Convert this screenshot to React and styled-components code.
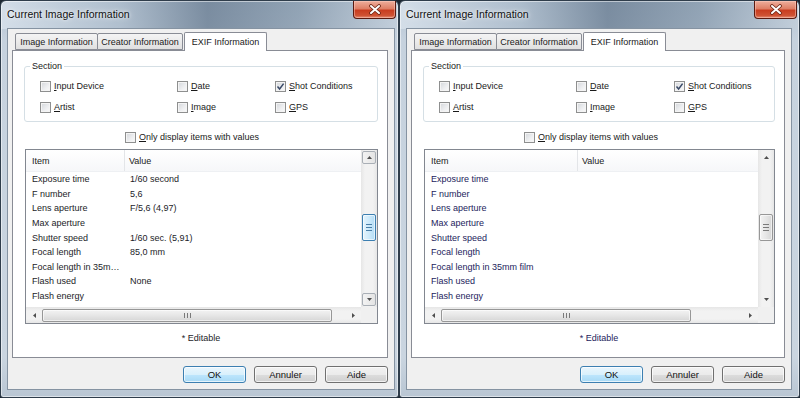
import React from "react";
import styled, { createGlobalStyle } from "styled-components";

const GlobalStyle = createGlobalStyle`
  html, body {
    margin: 0;
    padding: 0;
    background: #1d2833;
    overflow: hidden;
  }
  #root {
    width: 800px;
    height: 398px;
  }
`;

const ITEMS = [
  ["Exposure time", "1/60 second"],
  ["F number", "5,6"],
  ["Lens aperture", "F/5,6 (4,97)"],
  ["Max aperture", ""],
  ["Shutter speed", "1/60 sec. (5,91)"],
  ["Focal length", "85,0 mm"],
  ["Focal length in 35mm film", ""],
  ["Flash used", "None"],
  ["Flash energy", ""],
  ["Focal plane resolution", "3858,6"],
];

const Page = styled.div`
  display: flex;
  width: 800px;
  height: 398px;
  font-family: "Liberation Sans", Arial, sans-serif;
  font-size: 9px;
  color: #1a1a1a;
`;

const Window = styled.div`
  width: ${(p) => p.$w}px;
  height: 398px;
  box-sizing: border-box;
  border: 1px solid #2f3d4b;
  border-radius: 6px 6px 3px 3px;
  padding: 0 ${(p) => p.$padR}px 7px ${(p) => p.$padL}px;
  display: flex;
  flex-direction: column;
  background:
    linear-gradient(90deg, rgba(214, 224, 234, 0.9) 0%, rgba(170, 186, 202, 0.7) 30%, rgba(96, 116, 138, 0.7) 52%, rgba(120, 140, 160, 0.6) 75%, rgba(196, 208, 220, 0.7) 100%) top left / 100% 28px no-repeat,
    linear-gradient(180deg, #b4c3d2 0%, #c6d2de 10%, #cad5e0 90%, #b9c6d3 100%);
  box-shadow: inset 0 0 0 1px rgba(255, 255, 255, 0.5);
`;

const TitleBar = styled.div`
  height: 27px;
  flex-shrink: 0;
  display: flex;
  justify-content: space-between;
  align-items: flex-start;
  margin: 0 ${(p) => -p.$padR}px 0 ${(p) => -p.$padL}px;
  padding: 0 2px 0 6px;
`;

const Title = styled.div`
  margin-top: 7px;
  font-size: 10.5px;
  color: #111;
  text-shadow: 0 0 6px rgba(255, 255, 255, 0.9), 0 0 3px rgba(255, 255, 255, 0.8);
`;

const CloseButton = styled.div`
  width: 43px;
  height: 18px;
  box-sizing: border-box;
  border: 1px solid #5a1a10;
  border-top: none;
  border-radius: 0 0 4px 4px;
  display: flex;
  align-items: center;
  justify-content: center;
  background: linear-gradient(180deg, #eeae9c 0%, #de7f66 45%, #c93d20 55%, #cf5233 85%, #e6937a 100%);
  box-shadow: inset 0 0 0 1px rgba(255, 210, 200, 0.45);
`;

const Client = styled.div`
  flex: 1;
  min-height: 0;
  border: 1px solid #8593a2;
  background: #f0f0f0;
  padding: 2px 6px 0 4px;
  display: flex;
  flex-direction: column;
`;

const TabRow = styled.div`
  display: flex;
  align-items: flex-end;
  height: 19px;
  margin-left: 3px;
  position: relative;
  z-index: 1;
  flex-shrink: 0;
`;

const Tab = styled.div`
  width: ${(p) => p.$w}px;
  height: ${(p) => (p.$active ? 19 : 17)}px;
  box-sizing: border-box;
  margin-left: ${(p) => (p.$active ? 1 : p.$first ? 0 : -1)}px;
  margin-bottom: ${(p) => (p.$active ? -1 : 0)}px;
  border: 1px solid #898c95;
  border-bottom: ${(p) => (p.$active ? "none" : "1px solid #898c95")};
  border-radius: 2px 2px 0 0;
  background: ${(p) =>
    p.$active ? "#ffffff" : "linear-gradient(180deg, #f4f4f4 0%, #ebebeb 50%, #e0e0e0 100%)"};
  display: flex;
  align-items: center;
  justify-content: center;
  padding-top: 1px;
  padding-bottom: ${(p) => (p.$active ? 2 : 0)}px;
  white-space: nowrap;
`;

const Panel = styled.div`
  flex: 1;
  min-height: 0;
  border: 1px solid #898c95;
  background: #ffffff;
  padding: 0 9px 0 11px;
  display: flex;
  flex-direction: column;
`;

const GroupBox = styled.fieldset`
  margin: 10px 0 0 0;
  padding: 7px 0 7px 15px;
  border: 1px solid #d5dfe5;
  border-radius: 3px;
  display: grid;
  grid-template-columns: 137px 98px 1fr;
  row-gap: 7px;
`;

const Legend = styled.legend`
  margin-left: -10px;
  padding: 0 2px;
  line-height: 11px;
  font-size: 9px;
`;

const CheckRow = styled.label`
  display: flex;
  align-items: center;
  gap: 3px;
  height: 14px;
  white-space: nowrap;
`;

const Box = styled.span`
  width: 11px;
  height: 11px;
  box-sizing: border-box;
  border: 1px solid #8e8f8f;
  background: linear-gradient(135deg, #d3d6da 0%, #eeeff1 60%, #fafafa 100%);
  box-shadow: inset 0 0 0 1px #f4f4f4;
  display: flex;
  align-items: center;
  justify-content: center;
  flex-shrink: 0;
`;

const Key = styled.span`
  text-decoration: underline;
`;

const OnlyRow = styled(CheckRow)`
  margin-top: 9px;
  padding-left: 101px;
  height: 12px;
`;

const ListBox = styled.div`
  margin: 6px 0 0 1px;
  height: 175px;
  box-sizing: border-box;
  border: 1px solid #828790;
  background: #ffffff;
  display: grid;
  grid-template-columns: 1fr 16px;
  grid-template-rows: 1fr 16px;
  flex-shrink: 0;
`;

const ListContent = styled.div`
  overflow: hidden;
  min-height: 0;
  color: ${(p) => p.$ink};
`;

const Header = styled.div`
  height: 22px;
  box-sizing: border-box;
  display: flex;
  align-items: center;
  background: linear-gradient(180deg, #ffffff 0%, #f6f7f9 100%);
  border-bottom: 1px solid #eef0f3;
  color: #1a1a1a;
`;

const HeadCell = styled.div`
  width: ${(p) => (p.$w ? `${p.$w}px` : "auto")};
  flex: ${(p) => (p.$w ? "none" : 1)};
  height: 100%;
  box-sizing: border-box;
  display: flex;
  align-items: center;
  padding-left: ${(p) => (p.$w ? 6 : 4)}px;
  padding-top: 1px;
  border-right: ${(p) => (p.$w ? "1px solid #e3e5e8" : "none")};
`;

const Row = styled.div`
  height: 14.6px;
  display: flex;
  align-items: center;
  white-space: nowrap;
`;

const Cell = styled.div`
  width: ${(p) => (p.$w ? `${p.$w}px` : "auto")};
  flex: ${(p) => (p.$w ? "none" : 1)};
  box-sizing: border-box;
  padding: 0 ${(p) => (p.$w ? 3 : 0)}px 0 ${(p) => (p.$w ? 6 : 5)}px;
  overflow: hidden;
  text-overflow: ellipsis;
`;

const VScroll = styled.div`
  display: flex;
  flex-direction: column;
  align-items: center;
  background: linear-gradient(90deg, #e6e6e6 0%, #f2f2f2 25%, #f2f2f2 75%, #e6e6e6 100%);
`;

const HScroll = styled.div`
  display: flex;
  align-items: center;
  background: linear-gradient(180deg, #e6e6e6 0%, #f2f2f2 25%, #f2f2f2 75%, #e6e6e6 100%);
`;

const Corner = styled.div`
  background: #f0f0f0;
`;

const ArrowButton = styled.div`
  width: ${(p) => (p.$horiz ? 16 : 14)}px;
  height: ${(p) => (p.$horiz ? 14 : 13)}px;
  box-sizing: border-box;
  flex-shrink: 0;
  margin: 1px 0;
  display: flex;
  align-items: center;
  justify-content: center;
  border: 1px solid ${(p) => (p.$hover ? "#a9afb6" : "transparent")};
  border-radius: 2px;
  background: ${(p) =>
    p.$hover ? "linear-gradient(90deg, #f3f3f3 0%, #e4e4e4 100%)" : "transparent"};
`;

const Thumb = styled.div`
  box-sizing: border-box;
  flex-shrink: 0;
  border-radius: 2px;
  display: flex;
  align-items: center;
  justify-content: center;
  width: ${(p) => (p.$horiz ? `${p.$len}px` : "14px")};
  height: ${(p) => (p.$horiz ? "13px" : `${p.$len}px`)};
  margin-top: ${(p) => (p.$horiz ? 0 : p.$offset)}px;
  border: 1px solid ${(p) => (p.$hot ? "#3c7fb1" : "#979797")};
  background: ${(p) =>
    p.$hot
      ? "linear-gradient(90deg, #e5f4fc 0%, #cdeafb 50%, #b3dcf5 100%)"
      : p.$horiz
      ? "linear-gradient(180deg, #f3f3f3 0%, #e6e6e6 50%, #d6d6d6 100%)"
      : "linear-gradient(90deg, #f3f3f3 0%, #e6e6e6 50%, #d6d6d6 100%)"};
  box-shadow: inset 0 0 0 1px rgba(255, 255, 255, 0.6);
`;

const Spacer = styled.div`
  flex: 1;
`;

const Note = styled.div`
  margin-top: 9px;
  text-align: center;
  color: ${(p) => p.$ink};
`;

const ButtonRow = styled.div`
  display: flex;
  justify-content: flex-end;
  gap: 8px;
  padding: 8px 0 6px 0;
  flex-shrink: 0;
`;

const Button = styled.button`
  width: 63px;
  height: 17px;
  padding: 0;
  font-family: "Liberation Sans", Arial, sans-serif;
  font-size: 9.5px;
  color: #111;
  border: 1px solid ${(p) => (p.$default ? "#3c7fb1" : "#707070")};
  border-radius: 3px;
  background: ${(p) =>
    p.$default
      ? "linear-gradient(180deg, #eaf6fd 0%, #d9f0fc 50%, #bee6fd 51%, #a7d9f5 100%)"
      : "linear-gradient(180deg, #f2f2f2 0%, #ebebeb 50%, #dddddd 51%, #cfcfcf 100%)"};
  box-shadow: inset 0 0 0 1px rgba(255, 255, 255, 0.7);
`;

const CloseGlyph = () => (
  <svg width="14" height="11" viewBox="0 0 14 11">
    <path d="M3 2 L11 9 M11 2 L3 9" stroke="#6b2414" strokeWidth="3.6" strokeLinecap="round" />
    <path d="M3 2 L11 9 M11 2 L3 9" stroke="#ffffff" strokeWidth="2" strokeLinecap="round" />
  </svg>
);

const CheckMark = () => (
  <svg width="9" height="9" viewBox="0 0 9 9">
    <path d="M1.5 4.6 L3.6 7 L7.6 1.6" stroke="#3a4a68" strokeWidth="1.5" fill="none" />
  </svg>
);

const Arrow = ({ dir }) => {
  const paths = {
    up: "M1 4 L3.5 1 L6 4 Z",
    down: "M1 1 L3.5 4 L6 1 Z",
    left: "M4 1 L1 3.5 L4 6 Z",
    right: "M1 1 L4 3.5 L1 6 Z",
  };
  const horiz = dir === "left" || dir === "right";
  return (
    <svg width={horiz ? 5 : 7} height={horiz ? 7 : 5} viewBox={horiz ? "0 0 5 7" : "0 0 7 5"}>
      <path d={paths[dir]} fill="#4f4f4f" />
    </svg>
  );
};

const Grip = ({ horiz, color }) =>
  horiz ? (
    <svg width="7" height="5" viewBox="0 0 7 5">
      <path d="M0.5 0 V5 M3.5 0 V5 M6.5 0 V5" stroke={color} strokeWidth="1" />
    </svg>
  ) : (
    <svg width="6" height="7" viewBox="0 0 6 7">
      <path d="M0 0.5 H6 M0 3.5 H6 M0 6.5 H6" stroke={color} strokeWidth="1" />
    </svg>
  );

const Check = ({ checked, children }) => (
  <CheckRow>
    <Box>{checked ? <CheckMark /> : null}</Box>
    <span>{children}</span>
  </CheckRow>
);

const Label = ({ text }) => (
  <>
    <Key>{text[0]}</Key>
    {text.slice(1)}
  </>
);

const Dialog = ({ w, padL, padR, col, showValues, ink, hot, hThumb }) => (
  <Window $w={w} $padL={padL} $padR={padR}>
    <TitleBar $padL={padL} $padR={padR}>
      <Title>Current Image Information</Title>
      <CloseButton>
        <CloseGlyph />
      </CloseButton>
    </TitleBar>
    <Client>
      <TabRow>
        <Tab $w={83} $first>Image Information</Tab>
        <Tab $w={86}>Creator Information</Tab>
        <Tab $w={83} $active>EXIF Information</Tab>
      </TabRow>
      <Panel>
        <GroupBox>
          <Legend>Section</Legend>
          <Check><Label text="Input Device" /></Check>
          <Check><Label text="Date" /></Check>
          <Check checked><Label text="Shot Conditions" /></Check>
          <Check><Label text="Artist" /></Check>
          <Check><Label text="Image" /></Check>
          <Check><Label text="GPS" /></Check>
        </GroupBox>
        <OnlyRow>
          <Box />
          <span><Label text="Only display items with values" /></span>
        </OnlyRow>
        <ListBox>
          <ListContent $ink={ink}>
            <Header>
              <HeadCell $w={col}>Item</HeadCell>
              <HeadCell>Value</HeadCell>
            </Header>
            {ITEMS.map(([item, value]) => (
              <Row key={item}>
                <Cell $w={col}>{item}</Cell>
                <Cell>{showValues ? value : ""}</Cell>
              </Row>
            ))}
          </ListContent>
          <VScroll>
            <ArrowButton $hover={hot}>
              <Arrow dir="up" />
            </ArrowButton>
            <Thumb $len={27} $offset={49} $hot={hot}>
              <Grip color={hot ? "#4a7fa8" : "#7a7a7a"} />
            </Thumb>
            <Spacer />
            <ArrowButton $hover={hot}>
              <Arrow dir="down" />
            </ArrowButton>
          </VScroll>
          <HScroll>
            <ArrowButton $horiz>
              <Arrow dir="left" />
            </ArrowButton>
            <Thumb $horiz $len={hThumb}>
              <Grip horiz color="#7a7a7a" />
            </Thumb>
            <Spacer />
            <ArrowButton $horiz>
              <Arrow dir="right" />
            </ArrowButton>
          </HScroll>
          <Corner />
        </ListBox>
        <Note $ink={ink}>* Editable</Note>
      </Panel>
      <ButtonRow>
        <Button $default>OK</Button>
        <Button>Annuler</Button>
        <Button>Aide</Button>
      </ButtonRow>
    </Client>
  </Window>
);

export default function App() {
  return (
    <>
      <GlobalStyle />
      <Page>
        <Dialog w={399} padL={6} padR={3} col={99} showValues ink="#1c1c28" hot hThumb={290} />
        <Dialog w={401} padL={6} padR={7} col={153} ink="#23235c" hThumb={250} />
      </Page>
    </>
  );
}
